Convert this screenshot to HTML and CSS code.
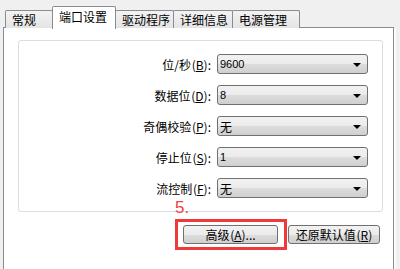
FILE: index.html
```html
<!DOCTYPE html>
<html lang="zh-CN">
<head>
    <meta charset="UTF-8">
    <title>端口设置</title>
    <link rel="stylesheet" href="styles.css">
</head>
<body>
    <!-- Tab strip -->
    <div class="tabs">
        <div class="tab">常规</div>
        <div class="tab active">端口设置</div>
        <div class="tab">驱动程序</div>
        <div class="tab">详细信息</div>
        <div class="tab">电源管理</div>
    </div>

    <div class="panel">
        <div class="group">
            <div class="row">
                <span class="label">位/秒 (<u>B</u>):</span>
                <div class="combo"><span>9600</span><i class="arrow"></i></div>
            </div>
            <div class="row">
                <span class="label">数据位 (<u>D</u>):</span>
                <div class="combo"><span>8</span><i class="arrow"></i></div>
            </div>
            <div class="row">
                <span class="label">奇偶校验 (<u>P</u>):</span>
                <div class="combo"><span class="cjk">无</span><i class="arrow"></i></div>
            </div>
            <div class="row">
                <span class="label">停止位 (<u>S</u>):</span>
                <div class="combo"><span>1</span><i class="arrow"></i></div>
            </div>
            <div class="row">
                <span class="label">流控制 (<u>F</u>):</span>
                <div class="combo"><span class="cjk">无</span><i class="arrow"></i></div>
            </div>
        </div>

        <div class="actions">
            <!-- annotation box around the advanced button -->
            <div class="mark">
                <span class="step">5.</span>
                <button class="btn btn-adv">高级 (<u>A</u>)...</button>
            </div>
            <button class="btn btn-reset">还原默认值 (<u>R</u>)</button>
        </div>
    </div>
</body>
</html>
```

FILE: styles.css
```css
body {
    margin: 0;
    background-color: #f0f0f0;
    font-family: "Noto Sans CJK SC", sans-serif;
    font-size: 12px;
    color: #000;
    height: 269px;
    overflow: hidden;
}
.tabs {
    display: flex;
    align-items: flex-end;
    height: 28px;
    padding-left: 5px;
    position: relative;
    z-index: 1;
}
.tab {
    box-sizing: border-box;
    height: 18px;
    line-height: 17px;
    padding: 0 0 0 6px;
    white-space: nowrap;
    border: 1px solid #898c95;
    border-bottom: none;
    margin-right: -1px;
    border-radius: 2px 2px 0 0;
    background: linear-gradient(#f3f3f3, #e4e4e4);
}
.tab:nth-child(1) { width: 48px; }
.tab:nth-child(3) { width: 59px; }
.tab:nth-child(4) { width: 60px; }
.tab:nth-child(5) { width: 68px; }
.tab.active {
    width: 64px;
    height: 23px;
    line-height: 19px;
    background: #fff;
    margin-bottom: -1px;
    position: relative;
}
.panel {
    margin: -1px 0 0 3px;
    width: 389px;
    height: 242px;
    background: #fff;
    border: 1px solid #898c95;
    border-bottom: none;
    box-shadow: 3px 0 0 -1px #fcfcfc;
}
.group {
    margin: 12px 10px 0 14px;
    height: 157px;
    border: 1px solid #d5dfe5;
    border-radius: 3px;
    padding: 13px 14px 0 0;
    display: flex;
    flex-direction: column;
    gap: 11px;
}
.row {
    display: flex;
    justify-content: flex-end;
    align-items: center;
    height: 20px;
}
.label {
    margin-right: 6px;
    word-spacing: -2px;
}
.label u, .btn u {
    text-decoration: underline;
}
.combo {
    width: 147px;
    height: 18px;
    border: 1px solid #707070;
    border-radius: 3px;
    background: linear-gradient(#f2f2f2 0%, #ebebeb 50%, #dddddd 51%, #cfcfcf 100%);
    display: flex;
    align-items: center;
    justify-content: space-between;
    padding: 0 0 0 2px;
    font-family: "Liberation Sans", sans-serif;
    font-size: 11px;
}
.combo .cjk {
    font-family: "Noto Sans CJK SC", sans-serif;
    font-size: 12px;
}
.arrow {
    width: 0;
    height: 0;
    border-left: 4px solid transparent;
    border-right: 4px solid transparent;
    border-top: 4px solid #000;
    margin-right: 6px;
    margin-top: 1px;
}
.actions {
    display: flex;
    justify-content: flex-end;
    align-items: center;
    padding-right: 13px;
    margin-top: 7px;
}
.mark {
    position: relative;
    border: 3px solid #f03a3a;
    padding: 3px 6px 3px 5px;
    margin-right: 1px;
}
.step {
    position: absolute;
    left: -3px;
    top: -24px;
    color: #f04040;
    font-family: "Liberation Sans", sans-serif;
    font-size: 17px;
    line-height: 20px;
}
.btn {
    height: 19px;
    border: 1px solid #707070;
    border-radius: 3px;
    background: linear-gradient(#f2f2f2 0%, #ebebeb 50%, #dddddd 51%, #cfcfcf 100%);
    font-family: "Noto Sans CJK SC", sans-serif;
    font-size: 12px;
    color: #000;
    padding: 0;
    line-height: 16px;
    display: block;
    word-spacing: -2px;
    white-space: nowrap;
}
.btn-adv {
    width: 95px;
}
.btn-reset {
    width: 92px;
}
```
